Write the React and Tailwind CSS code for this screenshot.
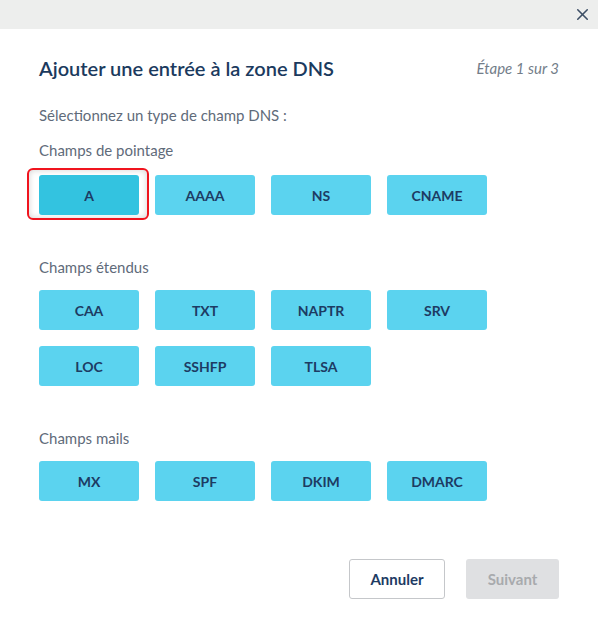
import { X } from "lucide-react";

const groups = [
  { label: "Champs de pointage", items: ["A", "AAAA", "NS", "CNAME"] },
  { label: "Champs étendus", items: ["CAA", "TXT", "NAPTR", "SRV", "LOC", "SSHFP", "TLSA"] },
  { label: "Champs mails", items: ["MX", "SPF", "DKIM", "DMARC"] },
];

function TypeButton({ name, selected }) {
  return (
    <div className="relative">
      {selected && (
        <div className="absolute -left-[12px] -right-[10px] -top-[7px] -bottom-[5px] rounded-[6px] border-2 border-[#f0141e] shadow-[inset_0_0_6px_rgba(0,0,0,0.18)]" />
      )}
      <button
        className={`relative w-[100px] h-10 rounded-[3px] text-[14px] font-bold text-[#1d3b63] ${
          selected ? "bg-[#33c3e0]" : "bg-[#5bd3ef]"
        }`}
      >
        {name}
      </button>
    </div>
  );
}

export default function App() {
  return (
    <div className="w-[598px] h-[627px] bg-white font-['Lato',sans-serif]">
      {/* Top bar */}
      <div className="h-[29px] bg-[#edeeed] flex items-center justify-end pr-[6px]">
        <X size={19} strokeWidth={2} className="text-[#3d4f66]" />
      </div>

      <div className="px-[39px] pt-[25px]">
        {/* Header */}
        <div className="flex items-center justify-between h-[28px]">
          <h1 className="text-[20px] font-semibold text-[#1b3a5e]">
            Ajouter une entrée à la zone DNS
          </h1>
          <span className="text-[15px] italic text-[#737d89]">Étape 1 sur 3</span>
        </div>

        <p className="mt-[23px] text-[15px] leading-5 text-[#5f6b7a]">
          Sélectionnez un type de champ DNS :
        </p>

        {groups.map((g, i) => (
          <div key={g.label} className={i === 0 ? "mt-[15px]" : "mt-[42px]"}>
            <div className="text-[15px] leading-5 text-[#5f6b7a]">{g.label}</div>
            <div className={`grid grid-cols-[repeat(4,100px)] gap-4 ${i === 0 ? "mt-[15px]" : "mt-[13px]"}`}>
              {g.items.map((name) => (
                <TypeButton key={name} name={name} selected={name === "A"} />
              ))}
            </div>
          </div>
        ))}

        {/* Footer */}
        <div className="mt-[58px] flex justify-end gap-[21px]">
          <button className="w-[96px] h-10 rounded-[3px] border border-[#c5c7ca] bg-white text-[15px] font-bold text-[#1d3b63]">
            Annuler
          </button>
          <button className="w-[93px] h-10 rounded-[3px] bg-[#dfe0e2] text-[15px] font-bold text-[#a8aaad]">
            Suivant
          </button>
        </div>
      </div>
    </div>
  );
}
